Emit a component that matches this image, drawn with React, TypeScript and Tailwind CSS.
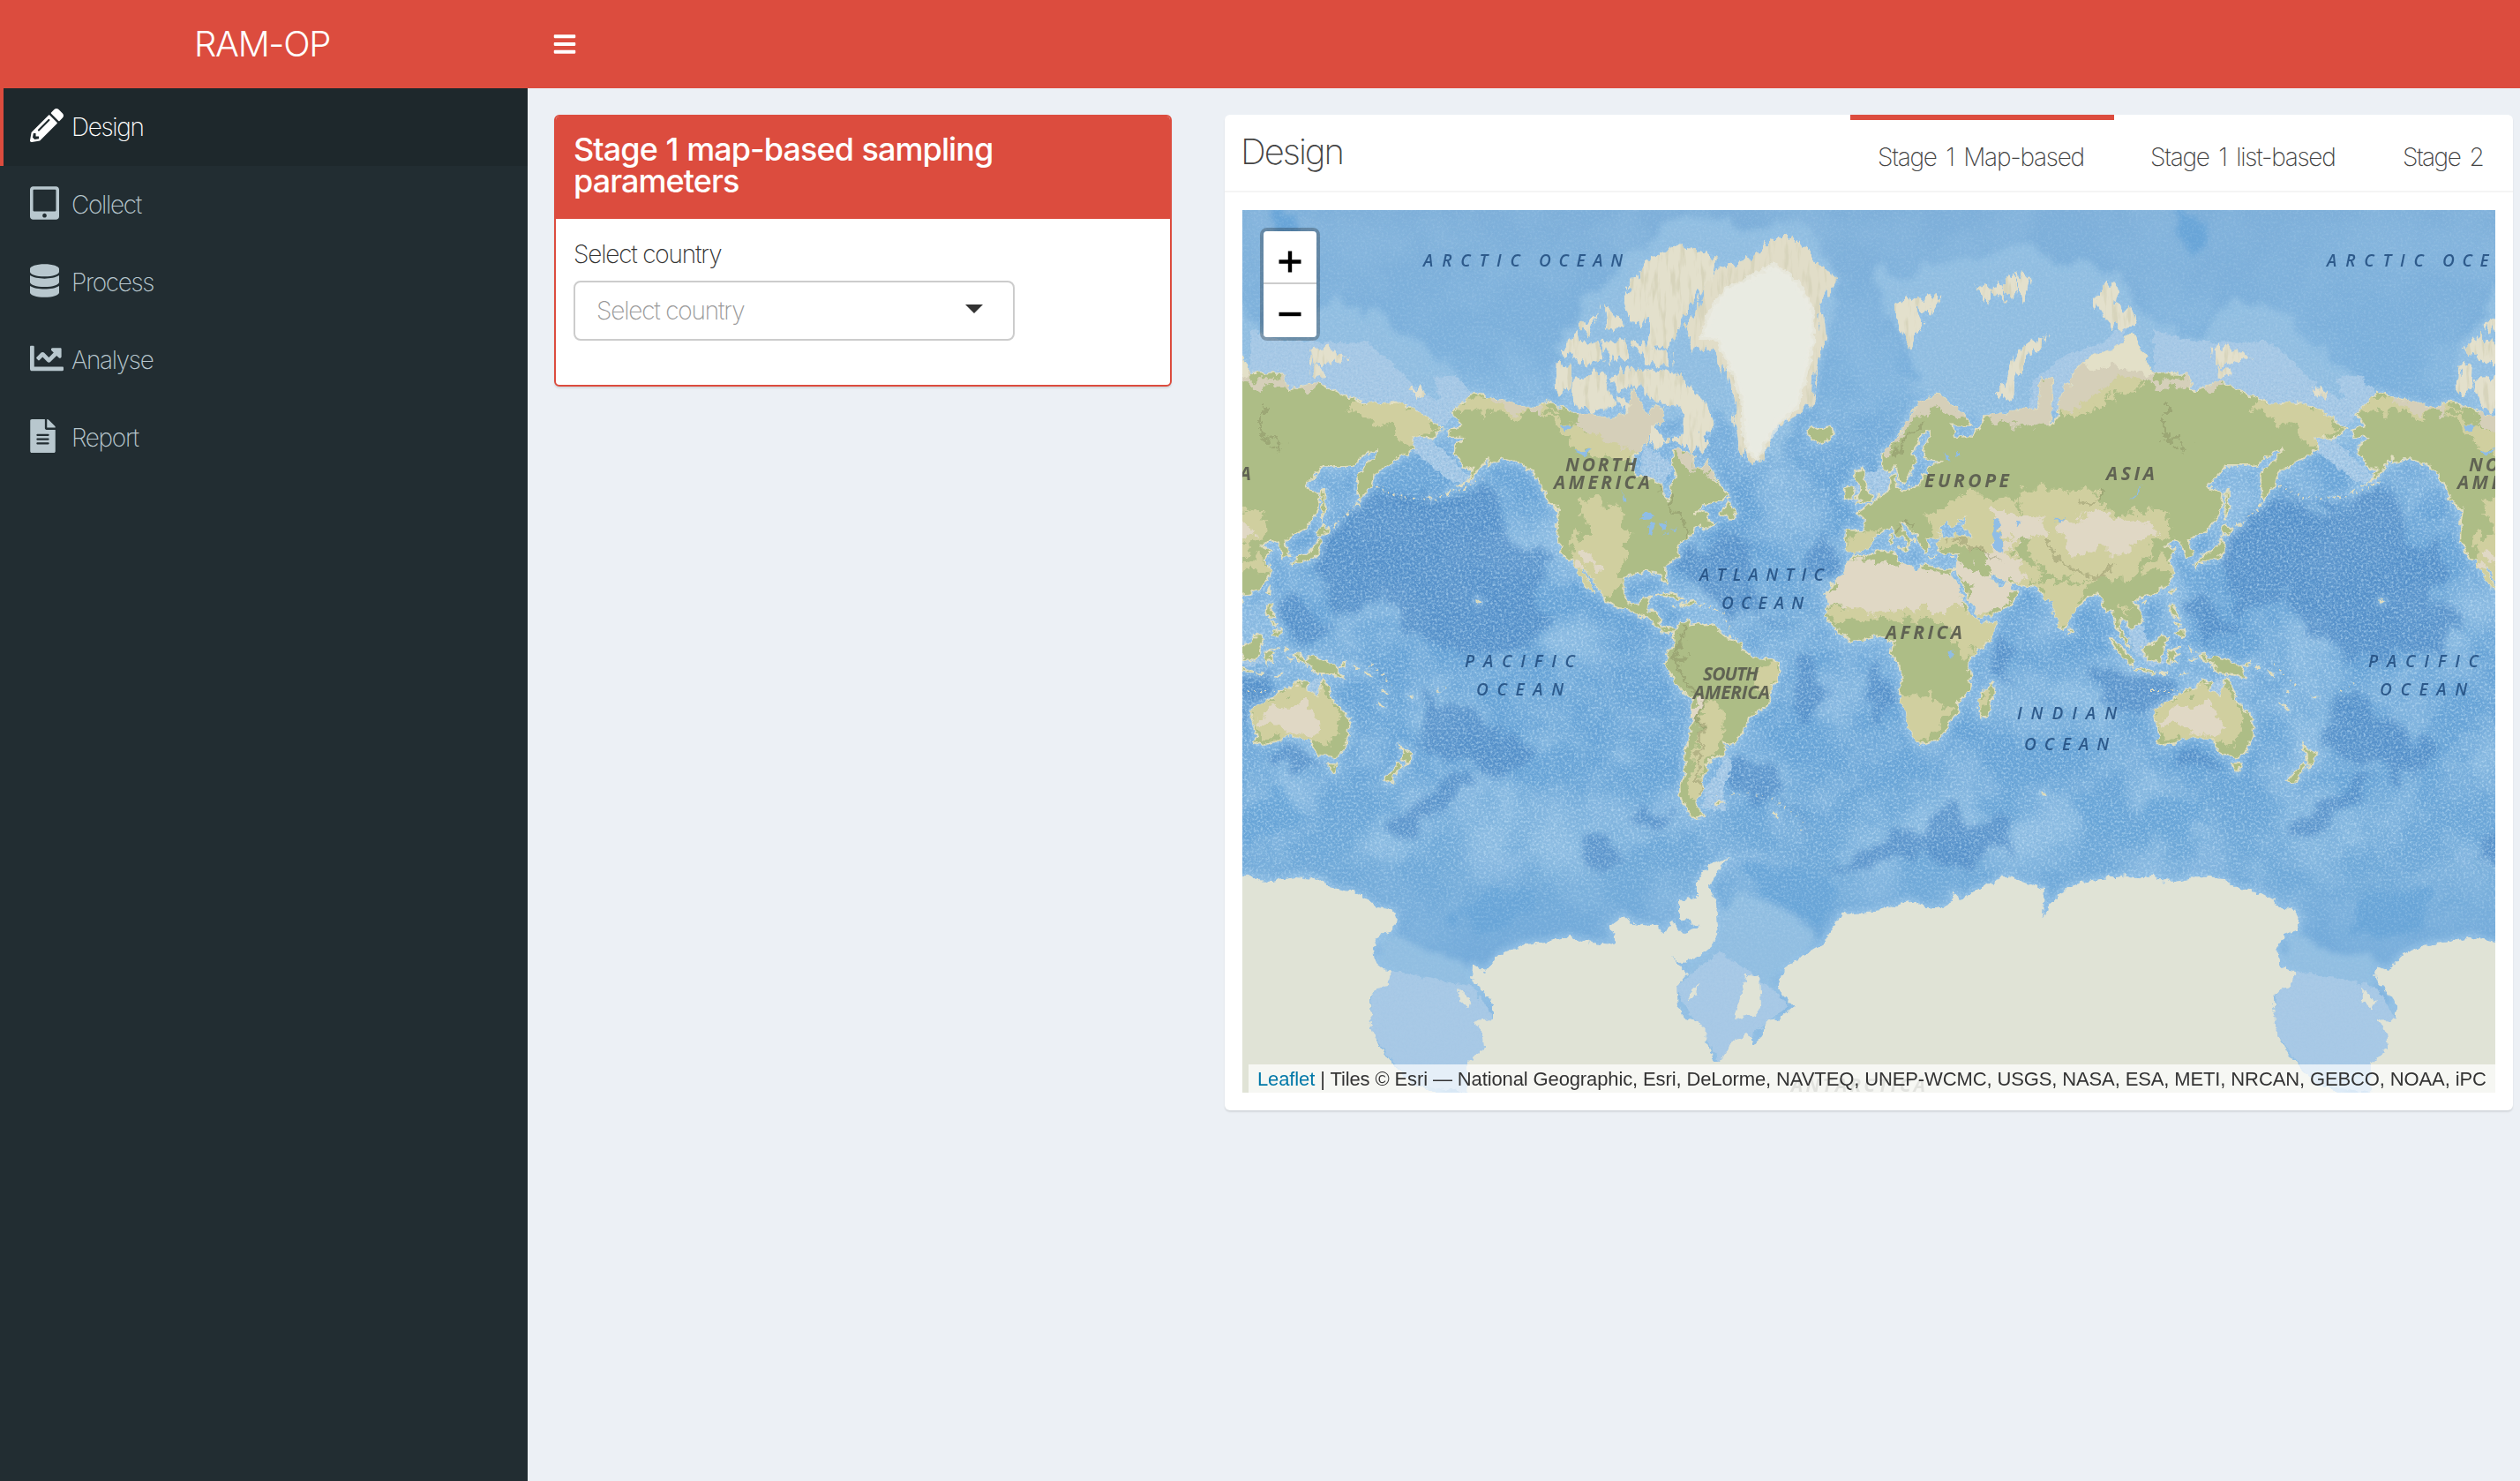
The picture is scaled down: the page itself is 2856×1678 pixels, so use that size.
import React from "react";
import { FaBars, FaChartLine, FaDatabase, FaFileAlt, FaPencilAlt, FaTabletAlt } from "react-icons/fa";

/* ---------- Map projection: Web Mercator, one world = 1024 units, centred on 0/0 ---------- */
const WORLD = 1024;
const CX = 710;
const CY = 500;

function project(pairs: string): string {
  return (
    "M" +
    pairs
      .trim()
      .split(/\s+/)
      .map((p) => {
        const [lon, lat] = p.split(",").map(Number);
        const x = CX + (lon * WORLD) / 360;
        const y = CY - (WORLD / (2 * Math.PI)) * Math.log(Math.tan(Math.PI / 4 + (lat * Math.PI) / 360));
        return x.toFixed(1) + " " + y.toFixed(1);
      })
      .join("L") +
    "Z"
  );
}

const LAND = [
  // North and Central America
  "-168,65.6 -162,66.5 -166,68.3 -163,69.5 -157,71.3 -150,70.5 -141,69.7 -134,69 -128,70.2 -124,69.5 -115,68.2 -108,68 -102,67.8 -96,68.3 -94,71.8 -91,70 -88,68 -85,69.5 -81.5,69 -82,67 -86,66.5 -88,64 -93,61.8 -94.7,58.8 -92.5,57 -88,56.5 -82.3,55.2 -82,53 -79.5,51.3 -78.7,53 -79.3,54.8 -76.6,57 -78.5,59 -77.5,62.4 -73.5,62.3 -70,61 -69.5,59 -67,58.5 -64.5,60.3 -62,57 -59,54.8 -55.8,52.5 -58.5,51.3 -66,50.2 -69.5,48 -65,49.2 -64.5,47.5 -64,46.2 -61,45.5 -65.5,43.5 -67,45 -70,43.8 -70.5,42 -74,40.6 -76,38 -75.7,35.4 -78,34 -81.2,31.8 -81.3,29.5 -80.2,26.5 -80.8,25.2 -82,27 -83,29.5 -85.3,29.8 -89.3,30.3 -91,29.2 -94.5,29.5 -97.3,27.8 -97.6,24 -97.5,21.5 -96,19 -94.3,18.2 -91.5,18.6 -90.4,20.8 -87,21.5 -87.8,18.2 -88.7,15.9 -86,15.9 -83.3,15 -83.6,11 -82,9 -79.6,9.5 -77.3,8.4 -78,7.3 -80.4,7.4 -82.9,8.2 -85.8,10.3 -87.6,13 -91.5,14 -94.5,16.2 -99,16.7 -102,17.9 -105.3,20 -105.6,22 -108.5,25.3 -110.5,27.5 -112.8,31 -114.7,31.5 -112.5,28.5 -110.5,25 -109.6,23 -112,24.7 -114.2,28 -116.5,31.3 -118,33.8 -120.6,34.6 -122.5,37.8 -124.3,40.5 -124,46.5 -123,49 -127.5,51 -130.3,54.6 -134,58 -139.5,59.8 -146,60.8 -148.5,60 -152,59.3 -151.5,61 -154,59.3 -158.5,56.3 -164.5,54.6 -160,56 -157.3,58.7 -162,58.8 -162,60 -165.5,61.5 -164.5,63.1 -161,64.5 -166,64.6",
  // South America
  "-77.3,8.6 -75.5,10.8 -71.7,12.3 -71.6,10.8 -68.3,11.4 -65,10.2 -61.8,10.6 -60,8.5 -57,6 -52,4.8 -50,1 -48.5,-1 -44,-2.7 -40,-2.9 -35.3,-5.2 -34.9,-8 -37.2,-11.5 -39,-13.5 -39.2,-17.8 -41,-22 -44.5,-23.1 -48.3,-25.8 -48.8,-28.5 -52,-33 -54.5,-34.8 -57.8,-34.4 -56.7,-36.5 -58,-38.2 -62.2,-39 -65,-41 -63.7,-42.6 -67.3,-45.8 -65.8,-47.8 -69,-50.8 -68.5,-52.5 -65.5,-54.8 -69,-55.3 -73,-53.2 -75.2,-50 -75.3,-47 -73,-43.5 -73.6,-39 -71.5,-32 -70.4,-24 -70.3,-18.3 -75.9,-14.5 -79.5,-8 -81.2,-5.5 -80,-3 -80.7,-1 -79,1.5 -77.3,3.8 -77.8,6.8",
  // Africa
  "-5.9,35.8 -1,35.5 3,36.9 10,37.3 11,34 15.3,32.3 19.5,30.4 21.5,32.9 29,31 34.2,31.2 32.7,29.6 35.5,24 37.3,20.8 39.5,15.6 43.2,12 44.5,10.5 51.2,11.8 48.3,5 42.5,-1 39.3,-5 40.6,-11 40.4,-15 35,-20 35.4,-23.8 32.7,-26 31.2,-29.5 27,-33.6 20,-34.7 18.2,-32.5 15.2,-27 14.4,-22 11.8,-16.5 13.7,-11 12.2,-5.5 9,-1 9.6,3.8 8,4.6 4.4,6.3 -2,4.8 -7.7,4.4 -13,8.5 -16.7,12.5 -17.3,14.8 -16.2,19 -17,21.5 -14.5,26 -10,29.8 -9.6,32",
  // Madagascar
  "49.3,-12.2 50.4,-15.8 47.2,-24.9 45,-25.4 43.5,-22.5 44.4,-16.5 47,-15",
  // Mainland Europe and Asia
  "-9.3,37 -6.3,36.6 -2,36.8 0,39 3.2,42 6,43.2 9,44.3 11,42.2 15.7,39.8 15.9,38 17,39.2 16.8,40.5 18.4,40 14,42.5 12.5,45.5 14,45.3 19.2,42 19.6,40 22.4,36.6 24,38.3 23,40.6 26,40.8 29,41 28,43.5 30.7,46.4 33.5,44.5 36.5,45.4 35,46.3 39.2,47.2 37.5,44.8 41.5,42 41,41 35,42 31,41.2 26.5,39.5 28,36.8 31,36.6 36,36.4 35.7,33.8 34.3,31.3 35,29.5 38.7,23.6 39.4,20.7 42.7,16 43.5,12.7 52,15.7 56.3,18 59.8,22.5 56.4,24.5 56.2,26.2 51.6,24.3 50.2,26.7 48,30 51,28.8 54.5,26.7 61.6,25.2 67,24.8 70.3,21 72.8,19.5 74.4,14 77.4,8.1 80,12.5 82.2,16.6 87,21 91.5,22.5 94.3,16 97.4,16.4 98.6,10 100.3,6 103.5,1.4 103.3,4.5 100.3,8.5 99.5,12 101,13 104.8,8.7 109.2,12 108.5,15.5 105.8,19.3 108.2,21.6 113.5,22.2 119,25.4 121.9,30 119.3,34.8 122.4,37.2 118,38.4 121.3,40.8 124.5,39.8 126.4,34.5 129.3,35.4 127.5,39.7 130.8,42.4 135,43.5 140.3,48.5 141.3,53 137,54 135.3,54.8 142.5,59.2 151,59.2 155,59.4 160,61.6 164.5,62.4 162.5,60.8 156,57.5 156.8,51.2 162.2,55 163.3,57.8 170.3,60 179.5,62.5 177.5,64.6 186,64.3 190.3,66 180,68.8 171,69.9 160,69.7 152,70.8 140,72.5 129,71.5 127,73.5 113.5,73.6 105,77.5 97,76 87,75.2 80.5,73.5 80.5,72 78,72.3 75,67.8 72.5,66.5 73,71 72.8,73 69,72.8 67,68.9 60,69 54.5,68.3 46,68 44,66.1 40,64.6 34.5,64.4 33,66.6 41,66.5 38,68.3 28,71 20,69.8 13,65.5 10.5,63.7 5,61.8 5.5,58.8 8,58 10.7,59.3 12.8,55.5 14.3,55.5 16.6,57.5 18.8,60 17.2,61.5 21.5,65.2 24.5,65.8 25,64.8 21.3,62.8 21.6,60.7 29.5,60 23.5,59.3 24,57.2 21.4,57.4 20,54.8 14,54 10.8,54.3 10.5,57.6 8.2,56.8 8.6,53.9 4.7,53 2,51 -1.5,49.6 -4.7,48.3 -1.3,46 -1.8,43.4 -9,43.4",
  // Britain, Ireland, Iceland
  "-5.5,50.1 1.3,51.3 1.5,52.8 -1.5,54.8 -2,57.6 -3.2,58.6 -6,58.3 -5.3,56 -3,54.4 -5,52 -3,51.4",
  "-10,51.7 -6.3,52.2 -5.6,54.6 -8,55.3 -10,54",
  "-22.5,64 -18.7,63.4 -13.7,65 -15.5,66.3 -20,65.8 -22.5,66.4 -24.3,65.5",
  // Mediterranean islands
  "8.3,39 9.6,39.5 9.4,42.8 8.6,42", "12.5,38 15.5,38.2 15,36.7", "23.6,35.4 26.2,35.2 24,34.9", "32.3,35 34.4,35.6 33,34.6",
  // Newfoundland, Vancouver, Cuba, Hispaniola
  "-59.3,47.7 -55.5,46.8 -52.8,47.2 -53.5,49 -56,51.5", "-128,50.7 -123.5,48.4 -125,49.8",
  "-84.8,21.9 -81,23.1 -77,21.9 -74.3,20.2 -77.6,19.9 -80,21.7", "-74.3,18.4 -70,19.8 -68.4,18.5 -71.5,17.8", "-78.2,18.3 -76.3,18 -77.5,17.8", "-67.2,18.4 -65.7,18.4 -66,18",
  // Japan, Sakhalin, Taiwan, Hainan
  "130,31.5 131.8,33.6 135.5,33.6 139,34.8 140.8,36 141.8,39.5 141,41.3 139.8,39.5 136.8,37 132.5,35.4 129.8,33", "140.2,42 143,42.1 145.3,43.4 141.8,45.3", "142,46 143.4,49.3 143,54.3 142,53", "120.2,23 121.8,25 121,22.2", "108.8,19 110.5,20 110.2,18.6", "80,7 79.9,9.3 81.8,7.3",
  // Indonesia and the Philippines
  "95.4,5.6 98.5,3.8 103.5,-1 106,-3.5 105.6,-5.8 102,-4 98.6,1", "105.5,-6.6 108.5,-6.6 114.4,-7.8 114.3,-8.6 108,-7.8", "109.1,1.7 113,3.1 117,7 119,5 117.5,1 116,-3.8 111,-3 109.5,-0.5",
  "119,-3 119.6,0.5 124.8,1.4 120.5,0.3 123.2,-1 121.5,-2 122.6,-4.6 120.4,-3 120.2,-5.5", "120.2,16.2 120.8,18.5 122.2,18.3 121.6,15.8 124,13 120.8,13.8", "122,7 124,8.6 126.2,8.5 125.5,5.8", "122,11.8 124,11 122.8,9.3", "123.5,-10.2 127.2,-8.4 125,-9.4", "116,-8.4 119,-8.4 117,-9", "128,1.8 128.8,1 128,-0.6", "128.2,-2.9 130.8,-3.2 129.2,-3.6",
  // New Guinea and Melanesia
  "131,-0.9 134,-0.9 135,-3.3 138,-1.7 144.5,-3.9 147.8,-6.5 150.6,-10.5 147,-9.5 143,-9.1 138.7,-8.2 138,-5.5 133,-4", "148.5,-5.7 152,-4.2 151,-6", "154.8,-5.5 156,-6.8 155.4,-6.6", "159.5,-8.2 161.5,-9.8 160,-9.6", "164,-20.2 167,-22.3 165.5,-21.6", "177.3,-17.5 178.6,-17.8 178,-18.3", "166.7,-15 167.5,-16.3 166.8,-16",
  // Australia and Tasmania
  "113.7,-22.6 114.2,-26.3 115.8,-32 115.2,-34.2 118,-35 123.5,-33.8 129,-31.7 134,-32.8 137.8,-33 138.2,-35.5 140.5,-38 144,-38.4 147,-38.8 150,-37.4 153,-31.5 153.3,-26 150.8,-23.4 146.3,-19 145.2,-15 142.6,-10.8 141.5,-13.5 140.8,-17.4 137,-16 135.5,-14.8 136.8,-12.2 132.5,-11.4 130,-14.8 127.5,-14 123.5,-17.3 122,-18.3 119,-20", "144.7,-40.8 148.3,-41 147.2,-43.5 146,-43.4",
  // New Zealand
  "172.8,-34.5 175.5,-36.6 178.4,-37.7 176.8,-40 175.2,-41.6 175,-39.8 173.8,-39.3 174.8,-38", "172.7,-40.6 174.2,-41.8 171,-44.2 170.4,-45.9 168.5,-46.6 166.6,-45.8",
  // Hawaii, Falklands, South Georgia, Kerguelen
  "-156,20.2 -154.9,19.5 -155.8,19", "-61,-51.4 -58,-51.5 -60.3,-52.2", "-38,-54 -36,-54.8 -37,-54.7", "69,-48.8 70.3,-49.3 69,-49.6",
  // Aleutians and Kurils
  "-168.5,53.2 -166.5,54 -167.5,53.2", "-175,52 -173.7,52.3 -174.6,51.9", "156,50.5 155.5,50 156.2,50", "147,44.7 148.5,45.4 147,44.4",
];

const ARCTIC = [
  // Baffin, Victoria, Banks, Ellesmere and neighbours
  "-89,73.6 -85,73.8 -80.5,73.7 -76,72.8 -68,70.4 -62,66.8 -64,65.2 -68,66.2 -65,63 -71,62.8 -77,64.4 -73,65.5 -72.6,68.2 -78,70 -84,70.2 -89,71.2",
  "-118,71.5 -117,72.8 -112,73 -106,73.5 -104.5,71 -101.5,69.6 -105,68.9 -115,69.3", "-125,72 -124.5,74.3 -119.5,74.1 -120,72 -123,71.2",
  "-91,80.5 -95,81 -90,82 -84,82.6 -75,83.1 -62,82.6 -64,81.5 -70,80.2 -75,79 -77,77.5 -80,76.3 -89,76.4 -86,77.8 -88,79",
  "-97,80 -92,81.3 -87.5,80.2 -91,78.3 -95,78.8", "-92,76.6 -88,74.7 -80.5,74.7 -80,75.6 -86,75.7 -89,76.3", "-102,73 -97,73.8 -96,72.6 -99,71.4", "-117,76.3 -108,76.6 -106,75.2 -112,74.7 -117,75.3", "-122,76 -117,77.3 -116,76.3 -121,75.7", "-105,79.3 -99,78.2 -104,78", "-114,78.2 -110,78.6 -112,77.7", "-104,76.5 -98,76.6 -96,75.2 -102,75.2", "-95,73.9 -90.3,73.6 -91,72.4 -95,72.3", "-99,70 -95.7,69.5 -97,68.7", "-87,65.7 -81,64 -84,62.9 -87,64",
  // Svalbard, Franz Josef Land, Novaya Zemlya, Severnaya Zemlya, New Siberian Islands, Wrangel
  "11,79.6 16,80 18,79.6 21,78.4 17,76.7 14,77.6", "18,80 27,80.2 24,79.3",
  "45,80.8 48,80.6 47,80.2", "50,80.7 52,80.9 53,80.3", "54,81 57,81.6 59,80.9 57,80.3", "60,81.6 64,81.3 62,80.4",
  "52,71 56,73.4 60,75.6 68,76.9 67,76.3 60,74.7 57.5,72.6 57.3,70.6", "91,80 94,81.1 98,80.7 97,79.5 103,79.3 105,78.3 99,77.9 95,79", "138,76 145,76 150,75.2 144,74.8 139,74.7", "140,74 143,73.5 140,73.3", "-181,71.5 -177.7,71.3 -179,70.8",
];

const GREENLAND =
  "-73,78.2 -68,76 -61,76 -56.5,73.5 -54,70.5 -53.5,67 -51.8,63.5 -48,61 -43.8,59.9 -41,62.8 -38,65.6 -30,68 -22.5,70 -22,72.5 -20,75 -18.5,77.3 -20,79.8 -13,81.4 -22,82.4 -30,83.5 -38,83.5 -48,82.4 -60,82 -65,81 -67,79.6";

const GREENLAND_ICE =
  "-66,77.2 -60,77 -53.5,73.5 -50,70 -49.5,66.5 -48,62.5 -44.5,61 -41,64 -36,67 -28.5,69.7 -26,73 -22.5,76.5 -23,79.5 -29,81.2 -38,82.2 -45,81.6 -56,80.8 -62,79.5";

const STEPPE = [
  "-115,52 -100,50 -97,44 -97,36 -98,26 -103,20 -112,22 -120,35 -118,40 -112,44", "-38,-4 -34,-8 -41,-17 -46,-12 -44,-6", "-64,-20 -58,-24 -60,-34 -64,-40 -67,-52 -72,-50 -70,-38 -67,-28", "-17,17 38,17 52,13 50,4 42,0 36,-3 34,5 28,12 10,13 -16,13", "13,-17 30,-18 33,-23 26,-31 18,-34 12,-25", "44,-15 48,-18 46,-25 43,-22",
  "-9,43 4,43 0,36 -9,37", "25,38 44,38 62,24 68,27 60,52 40,53 24,48", "60,54 90,54 96,48 118,49 121,42 112,38 104,28 88,27 70,30 58,36", "66,27 88,27 86,22 80,10 74,10 70,20", "112,-21 122,-18 133,-12 145,-17 149,-24 146,-36 136,-33 118,-34", "150,70 180,69.5 190,66 178,63 168,66", "-166,69 -155,71 -124,69.5 -140,68", "-130,69 -92,62 -95,60 -116,62", "60,68 110,74 108,72 94,70 82,68", "122,30 117,36 108,31", "100,18 104,17 103,13",
];

const DESERT = [
  "-15,29 -5,34 10,33 30,31 34,30 38,20 36,17 20,17 0,16 -16,18", "35,33 42,33 48,30 60,35 64,27 56,27 58,22 52,16 42,14", "45,37 62,41 72,43 66,48 50,48 54,42 60,30 50,30", "75,45 90,48 108,46 116,42 100,37 80,37", "120,-22 130,-20 142,-24 141,-30 128,-30 118,-28", "-70,-18 -66,-20 -68,-27 -71,-30", "-117,37 -110,36 -108,32 -114,31",
];

const TUNDRA = [
  "-125,70 -95,72 -80,70 -80,66 -92,62 -110,65", "-79,63 -62,61 -60,56 -68,58 -76,60", "5,62 16,69 28,71.5 40,69 40,67 26,69.5 16,67 8,61", "42,69 70,73 84,77 112,79 114,73 140,73 138,71 100,73 80,69 66,66 50,67", "-152,71 -132,69.5 -128,68 -150,69.3",
];

const CREAM = ["82,75 92,77 106,79 114,75 112,73.4 98,74.5 88,74"];

const LAKES = [
  "50,46.5 53,46.5 51,43.5 53.5,41 53.5,37 50,37.5 49,41", "58.5,46 61,46 60,44", "-92,47 -88,48.6 -84.8,46.7 -88,46.6", "-87.8,42 -86.4,42.2 -85,45.5 -87.3,45", "-84,46 -80,45 -82,43.2 -83.6,44.5", "-83,41.7 -79,42.8 -80,42.3", "-79.5,43.4 -76.3,44 -77,43.4", "31.8,0.4 34,0.3 33.5,-2.5 32,-2", "104,51.5 109.5,55.5 107,53", "30,61.5 32.5,61 32,60", "35,62 36.4,61.2 35.3,61", "-98,53.6 -96.5,50.6 -98,51", "-123,66.5 -118,66.6 -121,65.4", "-117,62 -110,62.6 -114,61.2", "73.5,46.6 79,46.5 76,45.4",
];

const RANGES = [
  "M455 288L475 306L486 330L497 352L508 372L530 392", "M500 475L494 515L506 535L522 555L517 620L520 660", "M910 375L925 398L950 412L975 418L990 400", "M735 362L760 356M800 371L842 385L862 398", "M770 240L752 258L740 280", "M945 332L975 322M1045 220L1045 258L1075 270",
];

const ANTARCTICA =
  "M7 753L15 760L35 761L48 757L59 755L89 758L102 768L125 772L144 782L150 789L169 793L174 800L172 816L157 821L149 834L151 853L159 860L169 862L164 879L152 882L145 891L146 927L152 941L162 956L172 969L192 990L222 1000L222 1010L255 1010L256 967L274 949L272 930L264 919L284 917L284 901L269 880L260 871L261 856L275 862L292 843L319 832L345 829L369 823L395 830L424 832L417 812L432 799L442 808L469 812L479 819L485 806L499 819L519 812L495 801L495 782L515 779L515 760L529 743L552 732L539 747L529 768L537 786L539 812L535 830L515 847L497 854L487 847L504 866L492 879L494 901L502 917L519 921L525 932L524 941L530 951L535 965L542 965L552 945L570 934L579 938L579 947L587 938L594 919L607 917L625 903L614 890L607 882L614 860L639 842L659 830L672 808L679 797L709 795L735 790L755 782L775 790L792 790L804 784L805 773L815 782L830 771L847 764L864 753L875 758L892 764L909 769L907 801L919 782L935 767L959 760L982 756L1002 753L1019 759L1032 753L1032 1012L6 1012L6 753Z";
const ICE_ISLANDS = "M570 867L586 868L588 900L583 911L556 917L565 890ZM520 875L507 898L506 888ZM245 882L260 896L256 904L246 895Z";

const DEEP =
  "M92 369L152 319L180 332L225 332L279 305L299 375L345 380L325 425L355 470L330 500L250 505L190 480L160 430L105 460L92 410ZM45 440L75 440L105 480L60 490ZM219 550L300 590L330 620L300 640L200 610ZM159 701L239 642L269 649L225 682L179 716ZM389 708L439 723L419 745L379 738ZM450 665L490 690L470 705L440 690ZM499 385L535 369L585 379L565 412L579 459L632 475L565 462L509 432L492 409ZM652 365L679 375L679 409L645 435L639 402ZM622 509L649 509L655 546L642 590L629 579ZM712 520L729 516L734 549L715 583L709 553ZM669 742L742 708L775 708L799 671L815 697L869 690L879 716L865 731L802 742L772 731L742 734L695 749ZM552 634L572 616L599 620L615 645L602 662L565 662L550 649ZM965 510L1055 530L1060 555L1010 575L965 555ZM1066 607L1120 625L1095 638L1060 622ZM850 480L880 500L870 540L845 520Z";
const FLAT =
  "M232 797L292 771L339 768L325 797L285 819L245 814ZM575 742L659 742L682 768L659 801L629 801L585 775ZM-5 672L30 660L60 675L75 695L40 704L-10 700ZM945 665L970 665L1010 690L1060 675L1085 700L1060 712L970 708ZM1037 0L1090 0Q1092 30 1078 54Q1060 40 1056 0Z";
const SHELF_MID =
  "M392 92L425 59L479 25L500 12L559 16L632 5L659 42L679 92L645 192L600 290L539 225L392 240L360 235L360 150ZM725 69L759 72L815 59L869 42L919 55L987 69L1010 95L1030 125L1072 142L1118 109L1144 102L1179 122L1217 149L1229 165L1286 209L1300 225L1248 260L1000 225L850 240L780 230L740 150ZM152 810L210 840L262 855L284 917L264 990L170 990L145 900ZM540 780L560 765L600 790L640 815L660 830L614 860L607 920L540 965L490 900Z";
const SHELF_LIGHT =
  "M1033 135L1072 148L1118 150L1165 150L1190 170L1225 205L1248 215L1240 190L1265 187L1286 209L1248 249L1240 262L1290 310L1262 308L1220 275L1200 225L1090 215L1033 190ZM895 195L930 165L975 150L1000 130L1000 220L890 232ZM165 862L215 870L262 880L284 917L256 1000L190 990L145 930L147 890ZM490 880L540 840L572 860L620 900L595 920L540 965ZM700 300L740 285L745 312L705 335L688 330ZM1090 545L1105 530L1118 535L1112 558ZM1028 370L1046 385L1042 412L1030 405ZM548 612L536 640L524 655L522 678L548 680L545 655L556 630ZM455 265L490 290L470 320L450 295ZM1000 462L1018 470L1032 500L1050 512L1030 518L1008 500Z";

const OCEAN_LABELS: [string, number, number, number][] = [
  ["ARCTIC", 205, 64, 110],
  ["OCEAN", 336, 64, 95],
  ["ATLANTIC", 518, 420, 141],
  ["OCEAN", 543, 452, 93],
  ["PACIFIC", 252, 518, 125],
  ["OCEAN", 265, 550, 99],
  ["INDIAN", 878, 577, 113],
  ["OCEAN", 886, 612, 96],
];
const LAND_LABELS: [string, number, number, number][] = [
  ["NORTH", 366, 296, 81],
  ["AMERICA", 353, 316, 109],
  ["EUROPE", 773, 314, 96],
  ["ASIA", 979, 306, 55],
  ["AFRICA", 729, 486, 87],
  ["SOUTH", 522, 533, 63],
  ["AMERICA", 511, 554, 87],
  ["ANTARCTICA", 622, 999, 152],
];

const many = (list: string[]) => list.map(project).join("");
const landPath = many(LAND);
const arcticPath = many(ARCTIC);
const greenlandPath = project(GREENLAND);

function WorldCopies({ id }: { id: string }) {
  return (
    <>
      {[-1, 0, 1].map((n) => (
        <use key={n} href={"#" + id} x={n * WORLD} />
      ))}
    </>
  );
}

function WorldMap() {
  return (
    <svg viewBox="0 0 1420 1000" className="block h-full w-full">
      <defs>
        <filter id="rough" x="-2%" y="-2%" width="104%" height="104%">
          <feTurbulence type="fractalNoise" baseFrequency="0.13" numOctaves="3" seed="4" />
          <feDisplacementMap in="SourceGraphic" scale="9" xChannelSelector="R" yChannelSelector="G" />
        </filter>
        {/* Polar islands are stretched north-south by the projection */}
        <filter id="streaks" x="-2%" y="-2%" width="104%" height="104%">
          <feTurbulence type="fractalNoise" baseFrequency="0.16 0.03" numOctaves="3" seed="7" result="n" />
          <feDisplacementMap in="SourceGraphic" in2="n" scale="18" xChannelSelector="R" yChannelSelector="G" result="shape" />
          <feColorMatrix in="n" values="0 0 0 0 0.68  0 0 0 0 0.66  0 0 0 0 0.5  0 0 5 0 -2.6" result="tint" />
          <feComposite in="tint" in2="shape" operator="in" result="marks" />
          <feMerge>
            <feMergeNode in="shape" />
            <feMergeNode in="marks" />
          </feMerge>
        </filter>
        <filter id="soft" x="-5%" y="-5%" width="110%" height="110%">
          <feTurbulence type="fractalNoise" baseFrequency="0.03" numOctaves="5" seed="9" result="n" />
          <feDisplacementMap in="SourceGraphic" in2="n" scale="46" xChannelSelector="R" yChannelSelector="G" />
          <feGaussianBlur stdDeviation="3" />
        </filter>
        <filter id="halo" x="-5%" y="-5%" width="110%" height="110%">
          <feGaussianBlur stdDeviation="3.5" />
        </filter>
        <filter id="biome" x="-5%" y="-5%" width="110%" height="110%">
          <feTurbulence type="fractalNoise" baseFrequency="0.06" numOctaves="4" seed="2" result="n" />
          <feDisplacementMap in="SourceGraphic" in2="n" scale="26" xChannelSelector="R" yChannelSelector="G" />
          <feGaussianBlur stdDeviation="0.7" />
        </filter>
        <filter id="grainDark" x="0" y="0" width="100%" height="100%">
          <feTurbulence type="fractalNoise" baseFrequency="0.42" numOctaves="3" seed="11" />
          <feColorMatrix values="0 0 0 0 0.2  0 0 0 0 0.44  0 0 0 0 0.7  2.8 0 0 0 -1.2" />
        </filter>
        <filter id="grainLight" x="0" y="0" width="100%" height="100%">
          <feTurbulence type="fractalNoise" baseFrequency="0.38" numOctaves="3" seed="23" />
          <feColorMatrix values="0 0 0 0 0.62  0 0 0 0 0.82  0 0 0 0 0.97  0 2.8 0 0 -1.3" />
        </filter>
        <filter id="mottleLight" x="0" y="0" width="100%" height="100%">
          <feTurbulence type="fractalNoise" baseFrequency="0.012" numOctaves="5" seed="5" />
          <feColorMatrix values="0 0 0 0 0.56  0 0 0 0 0.76  0 0 0 0 0.91  3 0 0 0 -1.3" />
        </filter>
        <filter id="mottleDark" x="0" y="0" width="100%" height="100%">
          <feTurbulence type="fractalNoise" baseFrequency="0.014" numOctaves="5" seed="31" />
          <feColorMatrix values="0 0 0 0 0.3  0 0 0 0 0.53  0 0 0 0 0.78  0 3.4 0 0 -1.55" />
        </filter>
        <linearGradient id="sea" x1="0" y1="0" x2="0" y2="1">
          <stop offset="0" stopColor="#7fb0da" />
          <stop offset="0.2" stopColor="#7cb1dd" />
          <stop offset="0.32" stopColor="#68a3d7" />
          <stop offset="0.62" stopColor="#67a3d7" />
          <stop offset="0.75" stopColor="#70a9d9" />
          <stop offset="1" stopColor="#7fb2de" />
        </linearGradient>
        <linearGradient id="oceanMask" x1="0" y1="0" x2="0" y2="1">
          <stop offset="0" stopColor="#444" />
          <stop offset="0.18" stopColor="#666" />
          <stop offset="0.3" stopColor="#fff" />
          <stop offset="0.72" stopColor="#fff" />
          <stop offset="0.84" stopColor="#333" />
          <stop offset="1" stopColor="#000" />
        </linearGradient>
        <mask id="open">
          <rect width="1420" height="1000" fill="url(#oceanMask)" />
        </mask>
        <clipPath id="landClip">
          <path d={landPath} />
        </clipPath>

        <g id="bathymetry">
          <path d={DEEP} fill="#4f8ac5" opacity="0.75" />
          <path d={FLAT} fill="#69a5d8" />
          <path d={SHELF_MID} fill="#93bfe2" />
        </g>
        <path id="shelves" d={SHELF_LIGHT} fill="#a8c9e6" />
        <path
          id="coast"
          d={landPath + arcticPath + greenlandPath + ANTARCTICA}
          fill="#96c2e6"
          stroke="#96c2e6"
          strokeWidth="9"
          strokeLinejoin="round"
        />
        <g id="land">
          <path d={landPath} fill="#adbd86" stroke="#e3dfc1" strokeWidth="1.6" />
          <g clipPath="url(#landClip)">
            <g filter="url(#biome)">
              <path d={many(STEPPE)} fill="#d0cf9f" />
              <path d={many(DESERT)} fill="#e0d8c5" />
              <path d={many(TUNDRA)} fill="#d5cfb9" />
              <path d={many(CREAM)} fill="#e3e0c8" />
            </g>
            <path d={RANGES.join("")} fill="none" stroke="#7c7f55" strokeOpacity="0.35" strokeWidth="4" filter="url(#biome)" />
          </g>
          <path d={many(LAKES)} fill="#8fbde6" />
        </g>
        <g id="polar">
          <path d={arcticPath} fill="#e3e0cc" stroke="#e3e0cc" strokeWidth="5" />
          <path d={greenlandPath} fill="#e1ddc8" stroke="#e1ddc8" strokeWidth="3" />
        </g>
        <path id="icecap" d={project(GREENLAND_ICE)} fill="#e9ebe2" stroke="#e9ebe2" strokeOpacity="0.7" strokeWidth="7" />
        <path id="ice" d={ANTARCTICA + ICE_ISLANDS} fill="#e0e3d6" />
        <g id="islets" fill="none" stroke="#e6dfc0" strokeWidth="2" strokeDasharray="2 5">
          <path d="M152 313L180 326L215 328L250 316L270 304" />
          <path d="M92 365L112 350L132 335" />
          <path d="M493 440L520 447L545 456L552 475" strokeDasharray="2 7" />
          <path d="M1030 545L1070 545L1095 535M1090 505L1105 525L1140 530" />
          <path d="M1170 515L1195 540M1245 545L1260 537" strokeDasharray="2 6" />
          <path d="M537 664L572 660L602 668L634 690L632 705" strokeWidth="1.5" strokeDasharray="1 8" />
        </g>
        <g id="trenches" fill="none" stroke="#3f7fc0" strokeWidth="4" strokeOpacity="0.55">
          <path d="M152 315L180 331L215 334L255 324" />
          <path d="M148 318L118 350L98 372L92 400L94 430L105 450" />
          <path d="M217 545L205 590L198 612" />
          <path d="M484 470L482 510L502 545L507 590" />
          <path d="M602 665L636 685L638 708" />
        </g>
        <g id="labels" fontFamily='"Open Sans", "Noto Sans", sans-serif'>
          <g fill="#1f4a7d" fontSize="19" fontStyle="italic" fontWeight="600" fillOpacity="0.85">
            {OCEAN_LABELS.map(([t, x, y, w]) => (
              <text key={t + x} x={x} y={y} textLength={w}>
                {t}
              </text>
            ))}
          </g>
          <g fill="#5c5e50" fontSize="21" fontStyle="italic" fontWeight="700">
            {LAND_LABELS.map(([t, x, y, w]) => (
              <text key={t + x} x={x} y={y} textLength={w} fillOpacity={t === "ANTARCTICA" ? 0.5 : 0.95}>
                {t}
              </text>
            ))}
          </g>
        </g>
      </defs>

      <rect width="1420" height="1000" fill="url(#sea)" />
      <g mask="url(#open)">
        <rect width="1420" height="1000" filter="url(#mottleLight)" opacity="0.4" />
        <rect width="1420" height="1000" filter="url(#mottleDark)" opacity="0.65" />
      </g>
      <g filter="url(#soft)">
        <WorldCopies id="bathymetry" />
      </g>
      <g filter="url(#halo)" opacity="0.8">
        <WorldCopies id="trenches" />
        <WorldCopies id="coast" />
      </g>
      <g filter="url(#rough)">
        <WorldCopies id="shelves" />
      </g>
      <g mask="url(#open)">
        <rect width="1420" height="1000" filter="url(#grainDark)" opacity="0.55" />
        <rect width="1420" height="1000" filter="url(#grainLight)" opacity="0.5" />
      </g>
      <g filter="url(#rough)">
        <WorldCopies id="land" />
        <WorldCopies id="ice" />
        <WorldCopies id="islets" />
      </g>
      <g filter="url(#streaks)">
        <WorldCopies id="polar" />
      </g>
      <g filter="url(#rough)">
        <WorldCopies id="icecap" />
      </g>
      <WorldCopies id="labels" />
    </svg>
  );
}

const MENU = [
  { label: "Design", Icon: FaPencilAlt, size: "h-[38px] w-[38px]", active: true },
  { label: "Collect", Icon: FaTabletAlt, size: "h-[38px] w-[33px]" },
  { label: "Process", Icon: FaDatabase, size: "h-[38px] w-[33px]" },
  { label: "Analyse", Icon: FaChartLine, size: "h-[38px] w-[38px]" },
  { label: "Report", Icon: FaFileAlt, size: "h-[38px] w-[29px]" },
];

function Sidebar() {
  return (
    <nav className="w-[598px] shrink-0 bg-[#222d32]">
      {MENU.map(({ label, Icon, size, active }) => (
        <a
          key={label}
          className={
            "flex h-[88px] items-start border-l-4 pt-[23px] pl-[30px] " +
            (active ? "border-[#dc4c3e] bg-[#1e282c] text-white" : "border-transparent text-[#b8c7ce]")
          }
        >
          <span className="flex h-[38px] w-[47px] shrink-0 justify-start">
            <Icon className={size} />
          </span>
          <span className="pt-px text-[28px] leading-10 font-[250] tracking-[-0.048em]">{label}</span>
        </a>
      ))}
    </nav>
  );
}

function ParameterBox() {
  return (
    <section className="h-[308px] w-[700px] shrink-0 overflow-hidden rounded-md border-2 border-[#dc4c3e] bg-white shadow-[0_2px_2px_rgba(0,0,0,0.1)]">
      <header className="h-[116px] bg-[#dc4c3e] px-5 pt-[19px]">
        <h3 className="w-[560px] text-[36px] leading-9 font-medium tracking-[-0.026em] text-white [word-spacing:1px]">
          Stage 1 map-based sampling parameters
        </h3>
      </header>
      <div className="px-5 pt-[20px] text-[28px] leading-10 font-[250] tracking-[-0.043em] text-[#333]">
        <label className="block">Select country</label>
        <div className="mt-[10px] flex h-[68px] w-[500px] items-center justify-between rounded-lg border-2 border-[#ccc] pr-[34px] pl-6 text-[#999]">
          <span>Select country</span>
          <span className="-mt-1 border-x-[10px] border-t-[10px] border-x-transparent border-t-[#333]" />
        </div>
      </div>
    </section>
  );
}

function MapBox() {
  return (
    <section className="h-[1128px] w-[1460px] shrink-0 rounded-md bg-white shadow-[0_2px_2px_rgba(0,0,0,0.1)]">
      <header className="flex h-[88px] items-start justify-between border-b-2 border-[#f4f4f4] font-[250] text-[#444]">
        <h2 className="pt-[20px] pl-[18px] text-[40px] leading-[44px] tracking-[-0.05em]">Design</h2>
        <div className="flex text-[28px] leading-10 tracking-[-0.045em] [word-spacing:4px]">
          <span className="w-[299px] border-t-[6px] border-[#dc4c3e] pt-[22px] pl-[31px]">Stage 1 Map-based</span>
          <span className="w-[286px] pt-[28px] pl-[41px]">Stage 1 list-based</span>
          <span className="w-[166px] pt-[28px] pl-[41px] tracking-[-0.055em]">Stage 2</span>
        </div>
      </header>
      <div className="relative mx-5 mt-5 h-[1000px] w-[1420px] overflow-hidden">
        <WorldMap />
        <div className="absolute top-5 left-5 flex w-[68px] flex-col rounded-lg border-4 border-black/25 bg-clip-padding">
          <span className="flex h-[60px] items-center justify-center rounded-t-[4px] border-b-2 border-[#ccc] bg-white pt-[9px]">
            <svg viewBox="0 0 26 26" className="h-[26px] w-[26px]">
              <path d="M0.5 13.5h25M13 1.5v24" stroke="#000" strokeWidth="4.4" />
            </svg>
          </span>
          <span className="flex h-[60px] items-center justify-center rounded-b-[4px] bg-white">
            <svg viewBox="0 0 26 26" className="h-[26px] w-[26px]">
              <path d="M0.5 17h25" stroke="#000" strokeWidth="4.4" />
            </svg>
          </span>
        </div>
        <div className="absolute right-0 bottom-0 flex h-8 w-[1413px] items-center bg-white/70 pl-[10px] text-[22px] tracking-[-0.12px] whitespace-nowrap text-[#333]">
          <span className="font-['Liberation_Sans',sans-serif]">
            <a className="text-[#0078a8]">Leaflet</a> | Tiles © Esri — National Geographic, Esri, DeLorme, NAVTEQ, UNEP-WCMC,
            USGS, NASA, ESA, METI, NRCAN, GEBCO, NOAA, iPC
          </span>
        </div>
      </div>
    </section>
  );
}

export default function App() {
  return (
    <div className="flex h-[1678px] w-[2856px] flex-col overflow-hidden bg-[#ecf0f5] font-['Inter','Liberation_Sans',sans-serif]">
      <header className="flex h-[100px] shrink-0 items-center bg-[#dc4c3e] text-white">
        <div className="w-[598px] pr-[4px] text-center text-[40px] font-light tracking-[-0.032em]">RAM-OP</div>
        <FaBars className="ml-[28px] h-7 w-auto" />
      </header>
      <div className="flex flex-1">
        <Sidebar />
        <main className="flex flex-1 items-start gap-[60px] pt-[30px] pl-[30px]">
          <ParameterBox />
          <MapBox />
        </main>
      </div>
    </div>
  );
}
